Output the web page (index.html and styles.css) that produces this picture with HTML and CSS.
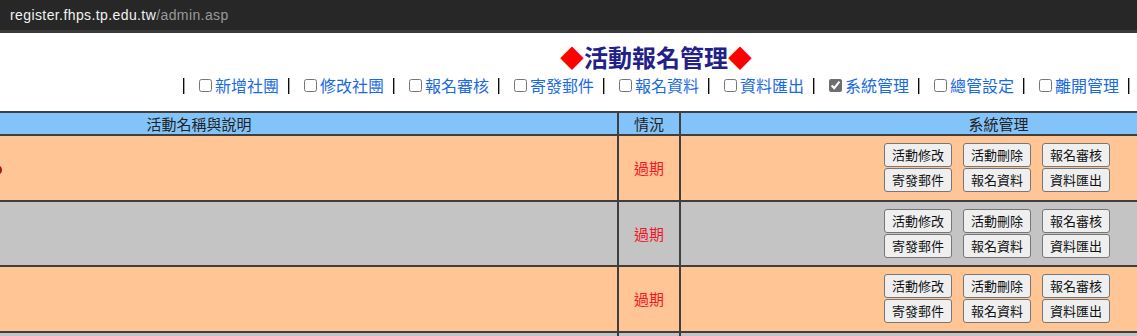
FILE: index.html
```html
<!DOCTYPE html>
<html lang="zh-Hant">
<head>
<meta charset="utf-8">
<title>活動報名管理</title>
<link rel="stylesheet" href="styles.css">
</head>
<body>
<div class="urlbar"><span class="host">register.fhps.tp.edu.tw</span><span class="path">/admin.asp</span></div>
<div class="head">
  <h1 class="title"><span class="dia">◆</span>活動報名管理<span class="dia">◆</span></h1>
  <nav class="menu">
    <span class="sep">|</span>
    <label class="item"><input type="checkbox" class="cb"><a href="#">新增社團</a></label>
    <span class="sep">|</span>
    <label class="item"><input type="checkbox" class="cb"><a href="#">修改社團</a></label>
    <span class="sep">|</span>
    <label class="item"><input type="checkbox" class="cb"><a href="#">報名審核</a></label>
    <span class="sep">|</span>
    <label class="item"><input type="checkbox" class="cb"><a href="#">寄發郵件</a></label>
    <span class="sep">|</span>
    <label class="item"><input type="checkbox" class="cb"><a href="#">報名資料</a></label>
    <span class="sep">|</span>
    <label class="item"><input type="checkbox" class="cb"><a href="#">資料匯出</a></label>
    <span class="sep">|</span>
    <label class="item"><input type="checkbox" class="cb" checked><a href="#">系統管理</a></label>
    <span class="sep">|</span>
    <label class="item"><input type="checkbox" class="cb"><a href="#">總管設定</a></label>
    <span class="sep">|</span>
    <label class="item"><input type="checkbox" class="cb"><a href="#">離開管理</a></label>
    <span class="sep">|</span>
  </nav>
</div>
<table class="list">
  <colgroup><col class="c1"><col class="c2"><col class="c3"></colgroup>
  <thead>
    <tr><th>活動名稱與說明</th><th>情況</th><th>系統管理</th></tr>
  </thead>
  <tbody>
    <tr class="row-a">
      <td class="name"><span class="dot"></span></td>
      <td class="state">過期</td>
      <td class="ops"><div class="btns">
        <button class="btn">活動修改</button><button class="btn">活動刪除</button><button class="btn">報名審核</button>
        <button class="btn">寄發郵件</button><button class="btn">報名資料</button><button class="btn">資料匯出</button>
      </div></td>
    </tr>
    <tr class="row-b">
      <td class="name"></td>
      <td class="state">過期</td>
      <td class="ops"><div class="btns">
        <button class="btn">活動修改</button><button class="btn">活動刪除</button><button class="btn">報名審核</button>
        <button class="btn">寄發郵件</button><button class="btn">報名資料</button><button class="btn">資料匯出</button>
      </div></td>
    </tr>
    <tr class="row-a">
      <td class="name"></td>
      <td class="state">過期</td>
      <td class="ops"><div class="btns">
        <button class="btn">活動修改</button><button class="btn">活動刪除</button><button class="btn">報名審核</button>
        <button class="btn">寄發郵件</button><button class="btn">報名資料</button><button class="btn">資料匯出</button>
      </div></td>
    </tr>
    <tr class="row-b">
      <td class="name"></td>
      <td class="state"></td>
      <td class="ops"></td>
    </tr>
  </tbody>
</table>
</body>
</html>
```
FILE: styles.css
```css
html, body {
  margin: 0;
  padding: 0;
  overflow: hidden;
  background: #ffffff;
}
body {
  width: 1137px;
  height: 336px;
  font-family: "Noto Sans CJK TC", "Liberation Sans", sans-serif;
}
.urlbar {
  height: 30px;
  background: #272727;
  border-bottom: 3px solid #3a3a3a;
  padding-left: 10px;
  display: flex;
  align-items: center;
  font-family: "Liberation Sans", Arial, sans-serif;
  font-size: 14px;
  letter-spacing: 0.4px;
}
.host { color: #f2f2f2; }
.path { color: #9a9a9a; }

.head {
  margin-left: 181px;
  width: 950px;
  text-align: center;
}
.title {
  margin: 10px 0 0;
  font-size: 24px;
  line-height: 28px;
  font-weight: bold;
  color: #22208a;
}
.dia { color: #ff0000; }

.menu {
  display: flex;
  align-items: center;
  height: 20px;
  margin-top: 4px;
  font-size: 16px;
  line-height: 20px;
}
.sep {
  flex: 0 0 18px;
  text-align: left;
  font-family: "DejaVu Sans", sans-serif;
  color: #000;
  will-change: transform;
  background: #fff;
}
.item {
  flex: 0 0 auto;
  display: flex;
  align-items: center;
  margin-right: 7px;
}
.cb {
  flex: 0 0 13px;
  margin: 0 3px 0 0;
  width: 13px;
  height: 13px;
  accent-color: #6e6e6e;
}
.item a {
  flex: 0 0 64px;
  color: #1a6ae0;
  text-decoration: none;
  text-align: left;
}

.list {
  border-collapse: collapse;
  table-layout: fixed;
  width: 1537px;
  margin: 16px 0 0 -221px;
}
.c1 { width: 838px; }
.c2 { width: 62px; }
.c3 { width: 637px; }
.list th, .list td {
  border: 2px solid #3f3f3f;
  padding: 0;
}
.list th {
  background: #82c4fa;
  font-weight: normal;
  font-size: 15px;
  height: 21px;
  line-height: 21px;
  color: #222;
}
.list td { height: 63.5px; }
.row-a td { background: #ffc594; }
.row-b td { background: #c4c4c4; }
.name { text-align: left; }
.dot {
  display: inline-block;
  width: 10px;
  height: 10px;
  border-radius: 50%;
  background: #a3161c;
  margin-left: 211px;
  vertical-align: middle;
}
.state {
  color: #f3172a;
  font-size: 15px;
  text-align: center;
}
.ops { text-align: center; }
.btns {
  display: inline-grid;
  grid-template-columns: repeat(3, 68px);
  gap: 1px 11px;
  vertical-align: middle;
  margin-left: -3px;
}
.btn {
  height: 24px;
  padding: 0;
  font-family: "Noto Sans CJK TC", sans-serif;
  font-size: 13px;
  line-height: 22px;
  border: 1px solid #767676;
  border-radius: 3px;
  background: #efefef;
  color: #111;
}
```
